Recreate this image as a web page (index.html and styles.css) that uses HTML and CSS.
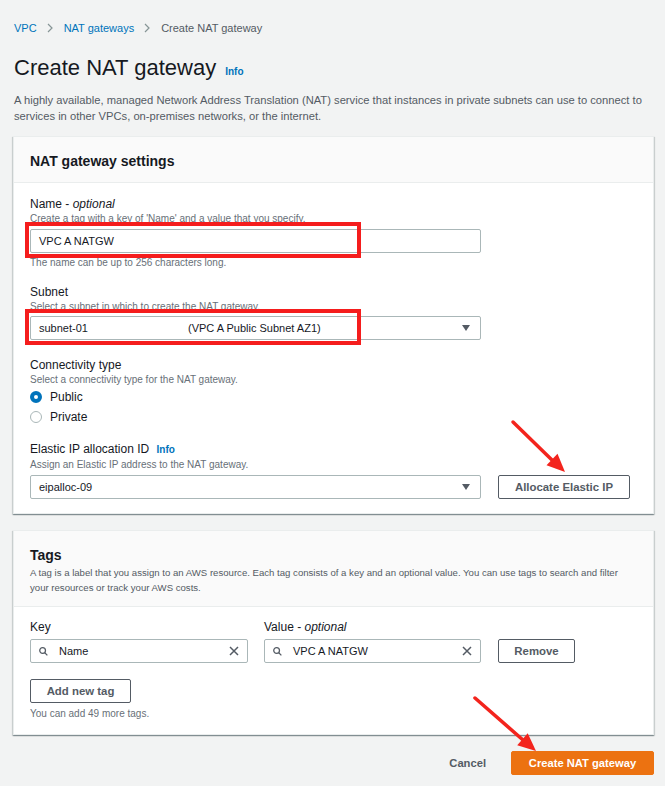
FILE: index.html
```html
<!DOCTYPE html>
<html lang="en">
<head>
<meta charset="utf-8">
<title>Create NAT gateway</title>
<link rel="stylesheet" href="styles.css">
</head>
<body>
<div class="page">
  <nav class="crumbs">
    <a class="crumb-link">VPC</a>
    <svg class="chev" viewBox="0 0 6 10"><path d="M1 1 L5 5 L1 9"/></svg>
    <a class="crumb-link">NAT gateways</a>
    <svg class="chev" viewBox="0 0 6 10"><path d="M1 1 L5 5 L1 9"/></svg>
    <span class="crumb-current">Create NAT gateway</span>
  </nav>

  <div class="title-row">
    <h1 class="title">Create NAT gateway</h1>
    <a class="info">Info</a>
  </div>
  <p class="lead">A highly available, managed Network Address Translation (NAT) service that instances in private subnets can use to connect to services in other VPCs, on-premises networks, or the internet.</p>

  <section class="panel">
    <div class="panel-head">
      <h2 class="panel-title">NAT gateway settings</h2>
    </div>
    <div class="panel-body">
      <div class="field">
        <div class="label">Name - <i>optional</i></div>
        <div class="hint">Create a tag with a key of 'Name' and a value that you specify.</div>
        <div class="control wide">
          <span class="value">VPC A NATGW</span>
          <span class="redbox"></span>
        </div>
        <div class="hint constraint">The name can be up to 256 characters long.</div>
      </div>

      <div class="field field-subnet">
        <div class="label">Subnet</div>
        <div class="hint">Select a subnet in which to create the NAT gateway.</div>
        <div class="control wide select">
          <span class="value subnet-id">subnet-01</span>
          <span class="value">(VPC A Public Subnet AZ1)</span>
          <svg class="caret" viewBox="0 0 8 6"><path d="M0 0 H8 L4 6 Z"/></svg>
          <span class="redbox"></span>
        </div>
      </div>

      <div class="field field-conn">
        <div class="label">Connectivity type</div>
        <div class="hint">Select a connectivity type for the NAT gateway.</div>
        <div class="radios">
          <div class="radio-row"><span class="radio checked"></span><span class="radio-label">Public</span></div>
          <div class="radio-row"><span class="radio"></span><span class="radio-label">Private</span></div>
        </div>
      </div>

      <div class="field field-eip">
        <div class="label">Elastic IP allocation ID <a class="info info-inline">Info</a></div>
        <div class="hint">Assign an Elastic IP address to the NAT gateway.</div>
        <div class="control-row">
          <div class="control wide select">
            <span class="value">eipalloc-09</span>
            <svg class="caret" viewBox="0 0 8 6"><path d="M0 0 H8 L4 6 Z"/></svg>
          </div>
          <button class="btn btn-allocate">Allocate Elastic IP</button>
        </div>
      </div>
    </div>
  </section>

  <section class="panel panel-tags">
    <div class="panel-head">
      <h2 class="panel-title">Tags</h2>
      <p class="panel-desc">A tag is a label that you assign to an AWS resource. Each tag consists of a key and an optional value. You can use tags to search and filter your resources or track your AWS costs.</p>
    </div>
    <div class="panel-body tags-body">
      <div class="tag-grid">
        <div class="label">Key</div>
        <div class="label">Value - <i>optional</i></div>
        <div></div>
        <div class="control search">
          <svg class="search-icon" viewBox="0 0 10 10"><circle cx="4" cy="4" r="3.2"/><path d="M6.4 6.4 L9.3 9.3"/></svg>
          <span class="value">Name</span>
          <svg class="clear-icon" viewBox="0 0 10 10"><path d="M1 1 L9 9 M9 1 L1 9"/></svg>
        </div>
        <div class="control search">
          <svg class="search-icon" viewBox="0 0 10 10"><circle cx="4" cy="4" r="3.2"/><path d="M6.4 6.4 L9.3 9.3"/></svg>
          <span class="value">VPC A NATGW</span>
          <svg class="clear-icon" viewBox="0 0 10 10"><path d="M1 1 L9 9 M9 1 L1 9"/></svg>
        </div>
        <button class="btn btn-remove">Remove</button>
      </div>
      <button class="btn btn-add">Add new tag</button>
      <div class="hint tags-left">You can add 49 more tags.</div>
    </div>
  </section>

  <div class="actions">
    <button class="btn-link">Cancel</button>
    <button class="btn-primary">Create NAT gateway</button>
  </div>

  <svg class="annotations" viewBox="0 0 665 786">
    <line x1="513" y1="422" x2="553" y2="461"/>
    <polygon points="565,472 546.5,465.3 557.5,453.7"/>
    <line x1="475" y1="698" x2="523" y2="740"/>
    <polygon points="536,751 517.2,745.2 527.7,733.2"/>
  </svg>
</div>
</body>
</html>
```

FILE: styles.css
```css
* {
  box-sizing: border-box;
}

html, body {
  margin: 0;
  padding: 0;
}

body {
  background: #f2f3f3;
  font-family: "Liberation Sans", Arial, sans-serif;
  color: #16191f;
}

.page {
  position: relative;
  width: 665px;
  height: 786px;
  overflow: hidden;
  padding: 20px 11px 0 13px;
}

/* breadcrumbs */
.crumbs {
  display: flex;
  align-items: center;
  height: 16px;
  padding-left: 1px;
  font-size: 11px;
  line-height: 16px;
}

.crumb-link {
  color: #0073bb;
}

.crumb-current {
  color: #545b64;
}

.chev {
  width: 6px;
  height: 10px;
  margin: 0 11px 0 10px;
  fill: none;
  stroke: #879596;
  stroke-width: 1.2;
}

/* title */
.title-row {
  display: flex;
  align-items: baseline;
  margin-top: 17px;
  padding-left: 1px;
}

.title {
  margin: 0;
  font-size: 22px;
  line-height: 30px;
  font-weight: 400;
  color: #16191f;
}

.info {
  color: #0073bb;
  font-size: 10px;
  font-weight: 700;
  margin-left: 9px;
}

.lead {
  margin: 9px 0 0 1px;
  font-size: 11.2px;
  line-height: 16px;
  color: #545b64;
}

/* panels */
.panel {
  margin-top: 12px;
  background: #ffffff;
  border: 1px solid #eaeded;
  box-shadow: 0 1px 1px 0 rgba(0, 28, 36, 0.3), 1px 1px 1px 0 rgba(0, 28, 36, 0.12), -1px 1px 1px 0 rgba(0, 28, 36, 0.12);
}

.panel-tags {
  margin-top: 16px;
}

.panel-head {
  background: #fafafa;
  border-bottom: 1px solid #eaeded;
  padding: 14px 16px 11px;
}

.panel-title {
  margin: 0;
  font-size: 14px;
  line-height: 20px;
  font-weight: 700;
  color: #16191f;
}

.panel-desc {
  margin: 0;
  font-size: 9.6px;
  line-height: 15px;
  color: #545b64;
}

.panel-body {
  padding: 13px 16px 14px;
}

.tags-body {
  padding: 12px 16px 13px;
}

/* fields */
.label {
  font-size: 12px;
  line-height: 16px;
  color: #16191f;
}

.label i {
  font-style: italic;
}

.info-inline {
  margin-left: 4px;
}

.hint {
  font-size: 10px;
  line-height: 14px;
  color: #687078;
}

.constraint {
  margin-top: 3px;
}

.field-subnet {
  margin-top: 14px;
}

.field-conn {
  margin-top: 17px;
}

.field-eip {
  margin-top: 14px;
}

.control {
  position: relative;
  display: flex;
  align-items: center;
  height: 24px;
  border: 1px solid #aab7b8;
  border-radius: 2px;
  background: #ffffff;
  padding: 0 10px 0 8px;
  font-size: 11px;
  color: #16191f;
}

.field > .control {
  margin-top: 3px;
}

.field-subnet > .control {
  margin-top: 2px;
}

.wide {
  width: 451px;
}

.subnet-id {
  width: 149px;
  flex: none;
}

.caret {
  width: 8px;
  height: 6px;
  margin-left: auto;
  fill: #545b64;
}

.redbox {
  position: absolute;
  left: -6px;
  top: -8px;
  width: 336px;
  height: 36px;
  border: 4px solid #f51d1d;
  pointer-events: none;
}

.control-row {
  display: flex;
  align-items: center;
  gap: 17px;
  margin-top: 3px;
}

/* radios */
.radios {
  display: flex;
  flex-direction: column;
}

.radio-row {
  display: flex;
  align-items: center;
  height: 20px;
}

.radio {
  width: 12px;
  height: 12px;
  border-radius: 50%;
  border: 1px solid #aab7b8;
  background: #ffffff;
  margin-right: 8px;
}

.radio.checked {
  border: 4px solid #0073bb;
}

.radio-label {
  font-size: 12px;
  color: #16191f;
}

/* buttons */
.btn {
  font-family: "Liberation Sans", Arial, sans-serif;
  font-weight: 700;
  font-size: 11.4px;
  color: #545b64;
  background: #ffffff;
  border: 1px solid #545b64;
  border-radius: 2px;
  height: 24px;
  padding: 0;
}

.btn-allocate {
  width: 132px;
}

.btn-remove {
  width: 77px;
  margin-left: 1px;
}

.btn-add {
  width: 101px;
  margin-top: 16px;
  display: block;
}

.tags-left {
  margin-top: 4px;
}

/* tags grid */
.tag-grid {
  display: grid;
  grid-template-columns: 218px 217px 78px;
  column-gap: 16px;
  row-gap: 4px;
  align-items: center;
}

.search {
  padding: 0 8px 0 8px;
}

.search-icon {
  width: 9px;
  height: 9px;
  fill: none;
  stroke: #545b64;
  stroke-width: 1.4;
  margin-right: 11px;
  flex: none;
}

.clear-icon {
  width: 10px;
  height: 10px;
  margin-left: auto;
  fill: none;
  stroke: #545b64;
  stroke-width: 1.5;
  flex: none;
}

/* footer actions */
.actions {
  display: flex;
  justify-content: flex-end;
  align-items: center;
  gap: 9px;
  margin-top: 16px;
}

.btn-link {
  font-family: "Liberation Sans", Arial, sans-serif;
  font-weight: 700;
  font-size: 11.2px;
  color: #545b64;
  background: transparent;
  border: none;
  padding: 0 16px;
  height: 24px;
}

.btn-primary {
  font-family: "Liberation Sans", Arial, sans-serif;
  font-weight: 700;
  font-size: 11.2px;
  color: #ffffff;
  background: #ec7211;
  border: 1px solid #ec7211;
  border-radius: 2px;
  width: 143px;
  height: 24px;
  padding: 0;
}

/* annotation arrows over the page */
.annotations {
  position: absolute;
  left: 0;
  top: 0;
  width: 665px;
  height: 786px;
  pointer-events: none;
}

.annotations line {
  stroke: #f3241d;
  stroke-width: 3.5;
  stroke-linecap: round;
}

.annotations polygon {
  fill: #f3241d;
}
```
